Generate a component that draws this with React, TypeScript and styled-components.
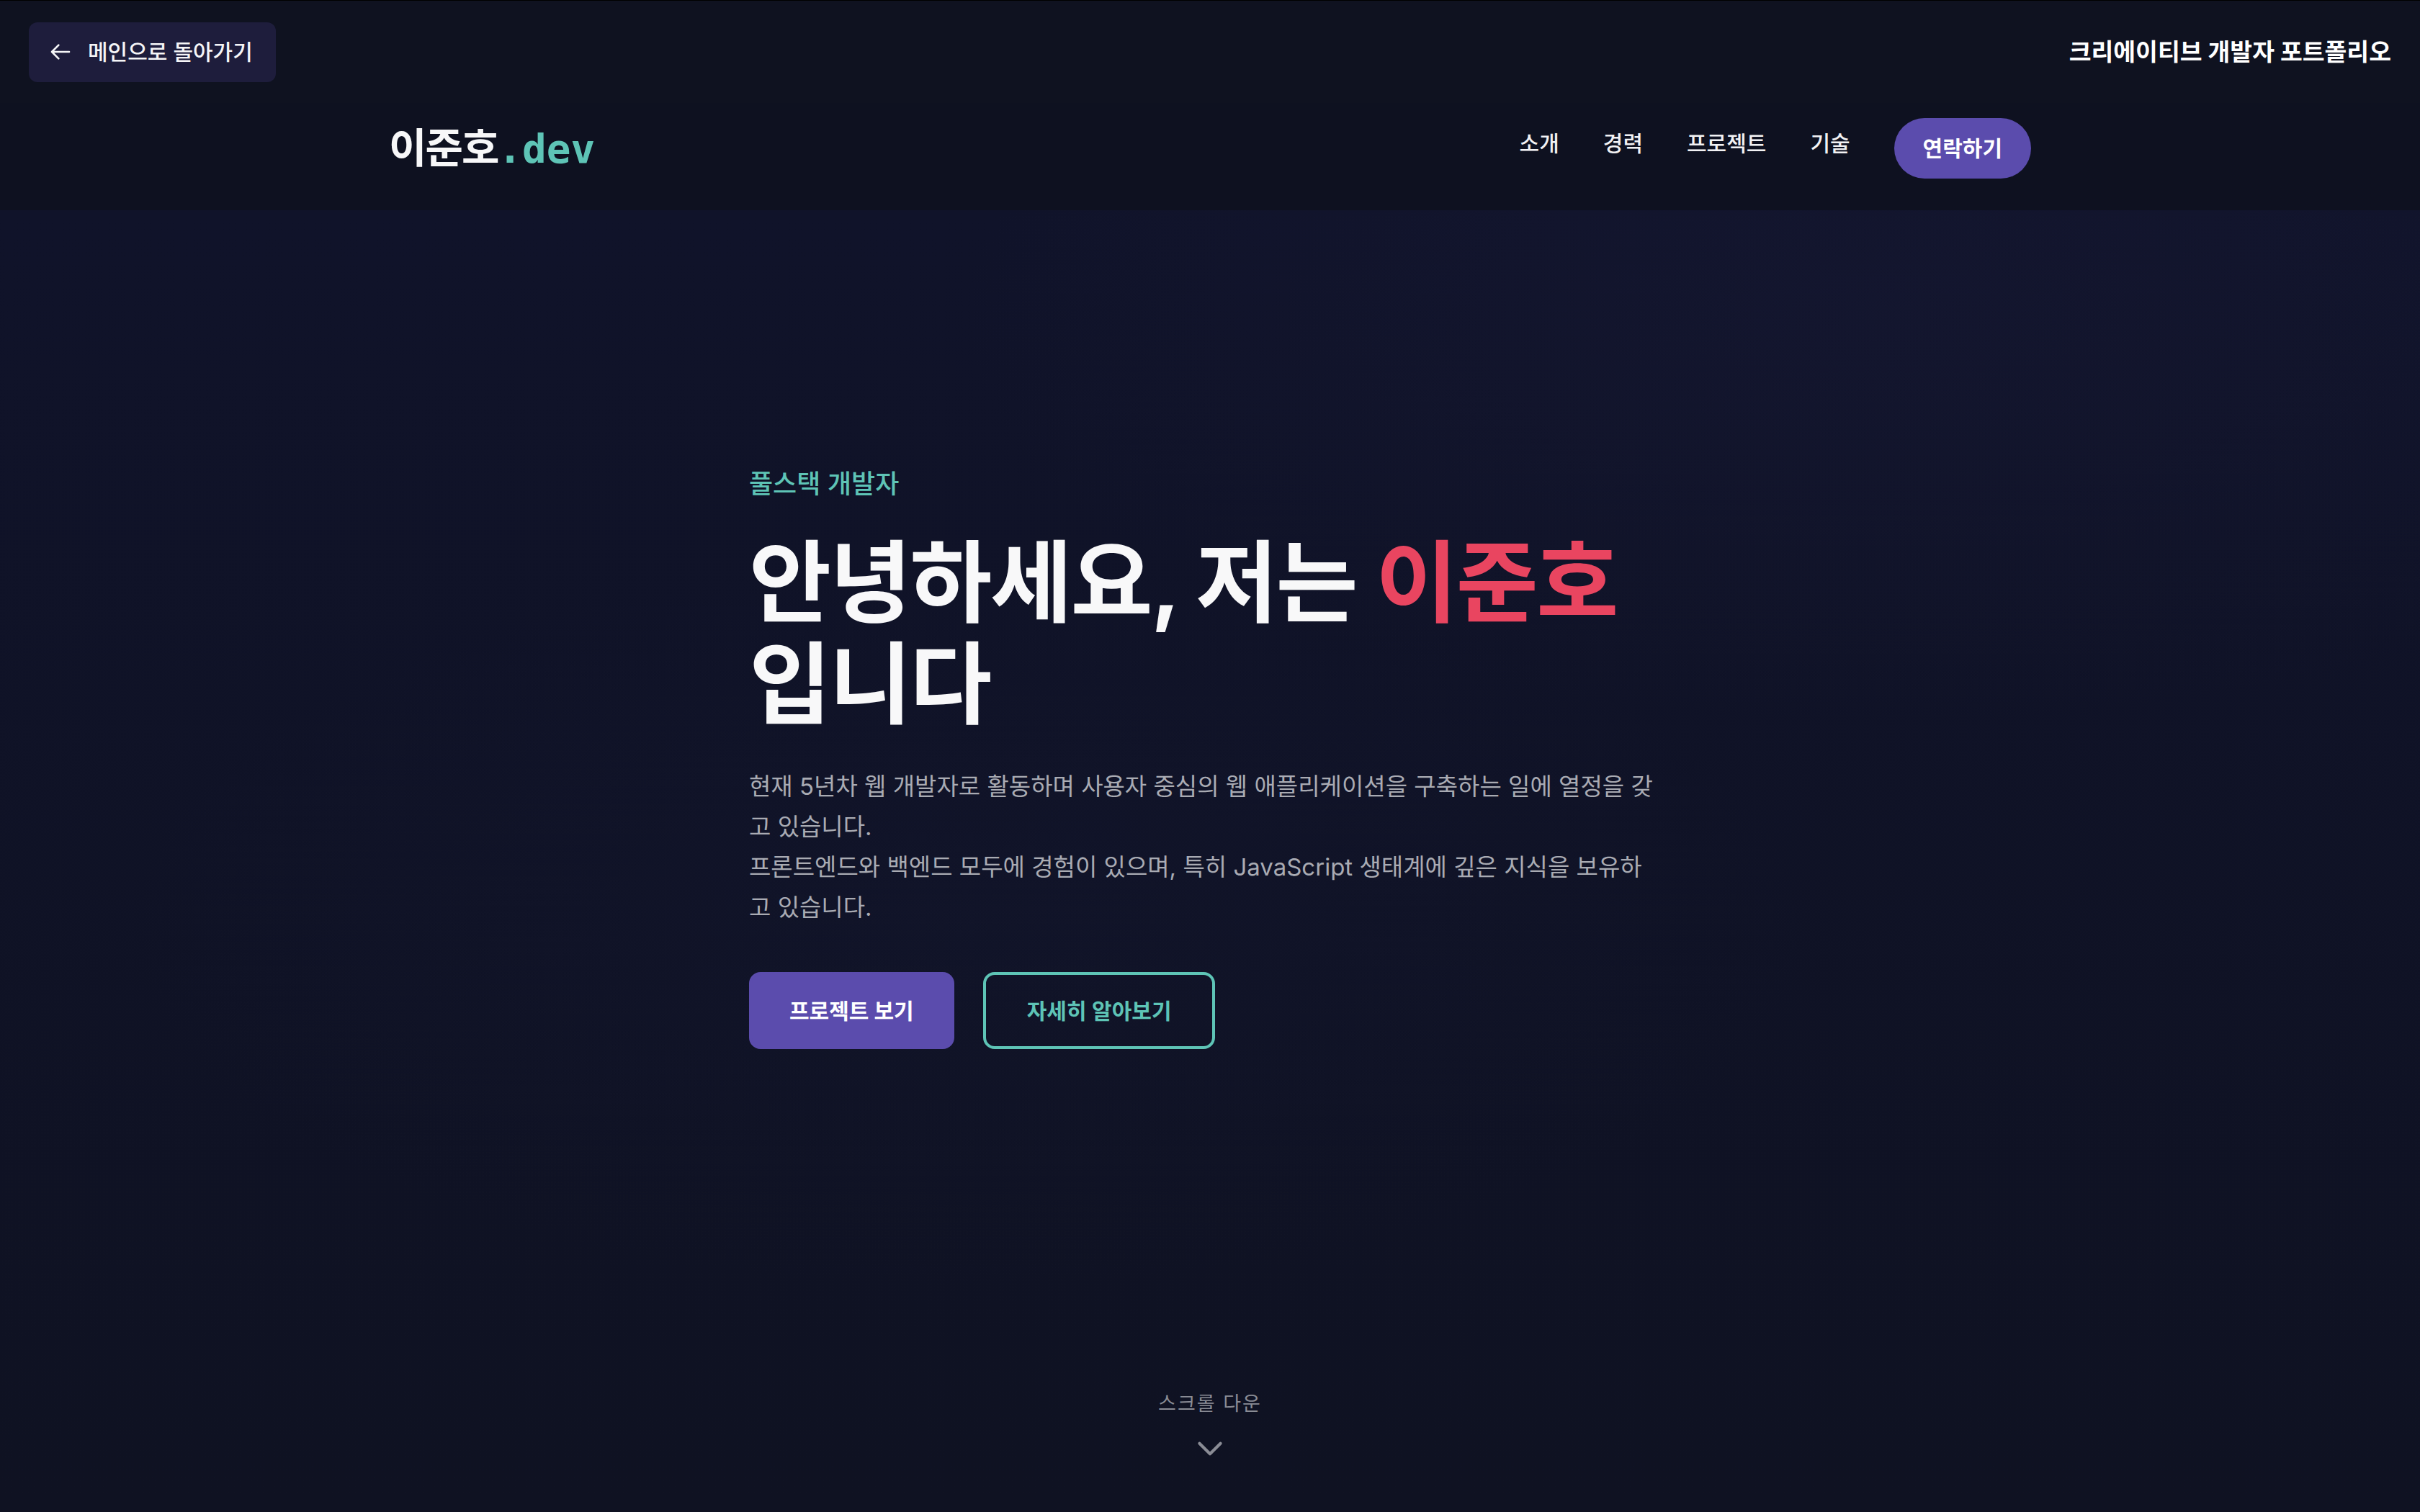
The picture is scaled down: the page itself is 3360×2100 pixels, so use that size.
import React from "react";
import styled, { createGlobalStyle } from "styled-components";

const GlobalStyle = createGlobalStyle`
  html, body {
    margin: 0;
    padding: 0;
    background: #0f1220;
  }
  body {
    font-family: "Inter", "Noto Sans CJK KR", sans-serif;
    color: #f4f4f5;
    -webkit-font-smoothing: antialiased;
  }
  * { box-sizing: border-box; }
`;

const Page = styled.div`
  min-height: 2100px;
  display: flex;
  flex-direction: column;
  background: #0f1220;
`;

const TopBar = styled.header`
  display: flex;
  align-items: center;
  justify-content: space-between;
  height: 143px;
  padding: 0 40px;
  border-top: 1px solid #000;
  background: #0f1220;
`;

const BackButton = styled.button`
  display: inline-flex;
  align-items: center;
  gap: 22px;
  height: 83px;
  padding: 0 32px 0 28px;
  border: none;
  border-radius: 12px;
  background: #1e1d3c;
  color: #f5f5f7;
  font-family: inherit;
  font-size: 30px;
  font-weight: 500;
  line-height: 44px;
  cursor: pointer;
`;

const PageTitle = styled.div`
  font-size: 33.5px;
  font-weight: 700;
  color: #ffffff;
  line-height: 48px;
`;

const NavBar = styled.nav`
  height: 149px;
  padding-top: 21px;
  background: #0e1120;
`;

const NavInner = styled.div`
  width: 2280px;
  margin: 0 auto;
  height: 84px;
  display: flex;
  align-items: center;
  justify-content: space-between;
`;

const Logo = styled.div`
  font-size: 57px;
  font-weight: 700;
  letter-spacing: -2px;
  color: #f7f7f8;
  line-height: 84px;
  white-space: nowrap;
`;

const LogoAccent = styled.span`
  font-family: "DejaVu Sans Mono", monospace;
  font-size: 56px;
  font-weight: 700;
  letter-spacing: 0;
  color: #5ec4b6;
`;

const NavLinks = styled.div`
  display: flex;
  align-items: center;
  gap: 61px;
`;

const NavLink = styled.a`
  font-size: 30px;
  font-weight: 500;
  line-height: 42px;
  padding-bottom: 14px;
  color: #f2f2f4;
  text-decoration: none;
  white-space: nowrap;
`;

const ContactButton = styled.button`
  height: 84px;
  padding: 0 40px;
  border: none;
  border-radius: 999px;
  background: #5b4cad;
  color: #ffffff;
  font-family: inherit;
  font-size: 30px;
  font-weight: 700;
  line-height: 42px;
  white-space: nowrap;
`;

const Hero = styled.section`
  flex: 1;
  display: flex;
  flex-direction: column;
  padding-top: 355px;
  background:
    radial-gradient(ellipse 55% 45% at 78% 8%, rgba(40, 40, 78, 0.14), transparent 70%),
    radial-gradient(ellipse 50% 40% at 40% 55%, rgba(30, 34, 70, 0.1), transparent 70%),
    linear-gradient(180deg, #10132a 0%, #0f1222 100%);
`;

const HeroContent = styled.div`
  width: 1280px;
  margin: 0 auto;
`;

const Eyebrow = styled.p`
  margin: 0;
  font-size: 36px;
  font-weight: 500;
  line-height: 51px;
  color: #5ec4b6;
`;

const Heading = styled.h1`
  margin: 41px 0 0;
  font-size: 124px;
  font-weight: 700;
  line-height: 141px;
  letter-spacing: -0.02em;
  color: #f8f8f9;
`;

const NameAccent = styled.span`
  color: #e94560;
`;

const Intro = styled.p`
  margin: 43px 0 0;
  font-size: 33px;
  font-weight: 400;
  line-height: 56px;
  color: #a9abb3;
  white-space: nowrap;
`;

const ButtonRow = styled.div`
  display: flex;
  gap: 40px;
  margin-top: 62px;
`;

const ActionButton = styled.button<{ $variant: "primary" | "outline" }>`
  height: 107px;
  padding: 0 ${(p) => (p.$variant === "primary" ? "52px" : "57px")};
  border: 4px solid ${(p) => (p.$variant === "primary" ? "#5b4cad" : "#5ec4b6")};
  border-radius: 16px;
  background: ${(p) => (p.$variant === "primary" ? "#5b4cad" : "transparent")};
  color: ${(p) => (p.$variant === "primary" ? "#ffffff" : "#5ec4b6")};
  font-family: inherit;
  font-size: 30px;
  font-weight: ${(p) => (p.$variant === "primary" ? 700 : 600)};
  line-height: 42px;
  white-space: nowrap;
  cursor: pointer;
`;

const ScrollHint = styled.div`
  margin-top: auto;
  padding-bottom: 64px;
  display: flex;
  flex-direction: column;
  align-items: center;
  gap: 15px;
  color: #8a8c95;
  font-size: 27px;
  line-height: 42px;
  letter-spacing: 2px;
`;

const ArrowLeftIcon = () => (
  <svg width="32" height="32" viewBox="0 0 24 24" fill="none" stroke="currentColor" strokeWidth="2" strokeLinecap="round" strokeLinejoin="round">
    <path d="M10 19l-7-7m0 0l7-7m-7 7h18" />
  </svg>
);

const ChevronDownIcon = () => (
  <svg width="50" height="50" viewBox="0 0 24 24" fill="none" stroke="currentColor" strokeWidth="2" strokeLinecap="round" strokeLinejoin="round">
    <path d="M19 9l-7 7-7-7" />
  </svg>
);

export default function App() {
  return (
    <>
      <GlobalStyle />
      <Page>
        <TopBar>
          <BackButton>
            <ArrowLeftIcon />
            메인으로 돌아가기
          </BackButton>
          <PageTitle>크리에이티브 개발자 포트폴리오</PageTitle>
        </TopBar>
        <NavBar>
          <NavInner>
            <Logo>
              이준호<LogoAccent>.dev</LogoAccent>
            </Logo>
            <NavLinks>
              <NavLink href="#about">소개</NavLink>
              <NavLink href="#career">경력</NavLink>
              <NavLink href="#projects">프로젝트</NavLink>
              <NavLink href="#skills">기술</NavLink>
              <ContactButton>연락하기</ContactButton>
            </NavLinks>
          </NavInner>
        </NavBar>
        <Hero>
          <HeroContent>
            <Eyebrow>풀스택 개발자</Eyebrow>
            <Heading>
              안녕하세요, 저는 <NameAccent>이준호</NameAccent>
              <br />
              입니다
            </Heading>
            <Intro>
              현재 5년차 웹 개발자로 활동하며 사용자 중심의 웹 애플리케이션을 구축하는 일에 열정을 갖
              <br />
              고 있습니다.
              <br />
              프론트엔드와 백엔드 모두에 경험이 있으며, 특히 JavaScript 생태계에 깊은 지식을 보유하
              <br />
              고 있습니다.
            </Intro>
            <ButtonRow>
              <ActionButton $variant="primary">프로젝트 보기</ActionButton>
              <ActionButton $variant="outline">자세히 알아보기</ActionButton>
            </ButtonRow>
          </HeroContent>
          <ScrollHint>
            스크롤 다운
            <ChevronDownIcon />
          </ScrollHint>
        </Hero>
      </Page>
    </>
  );
}
